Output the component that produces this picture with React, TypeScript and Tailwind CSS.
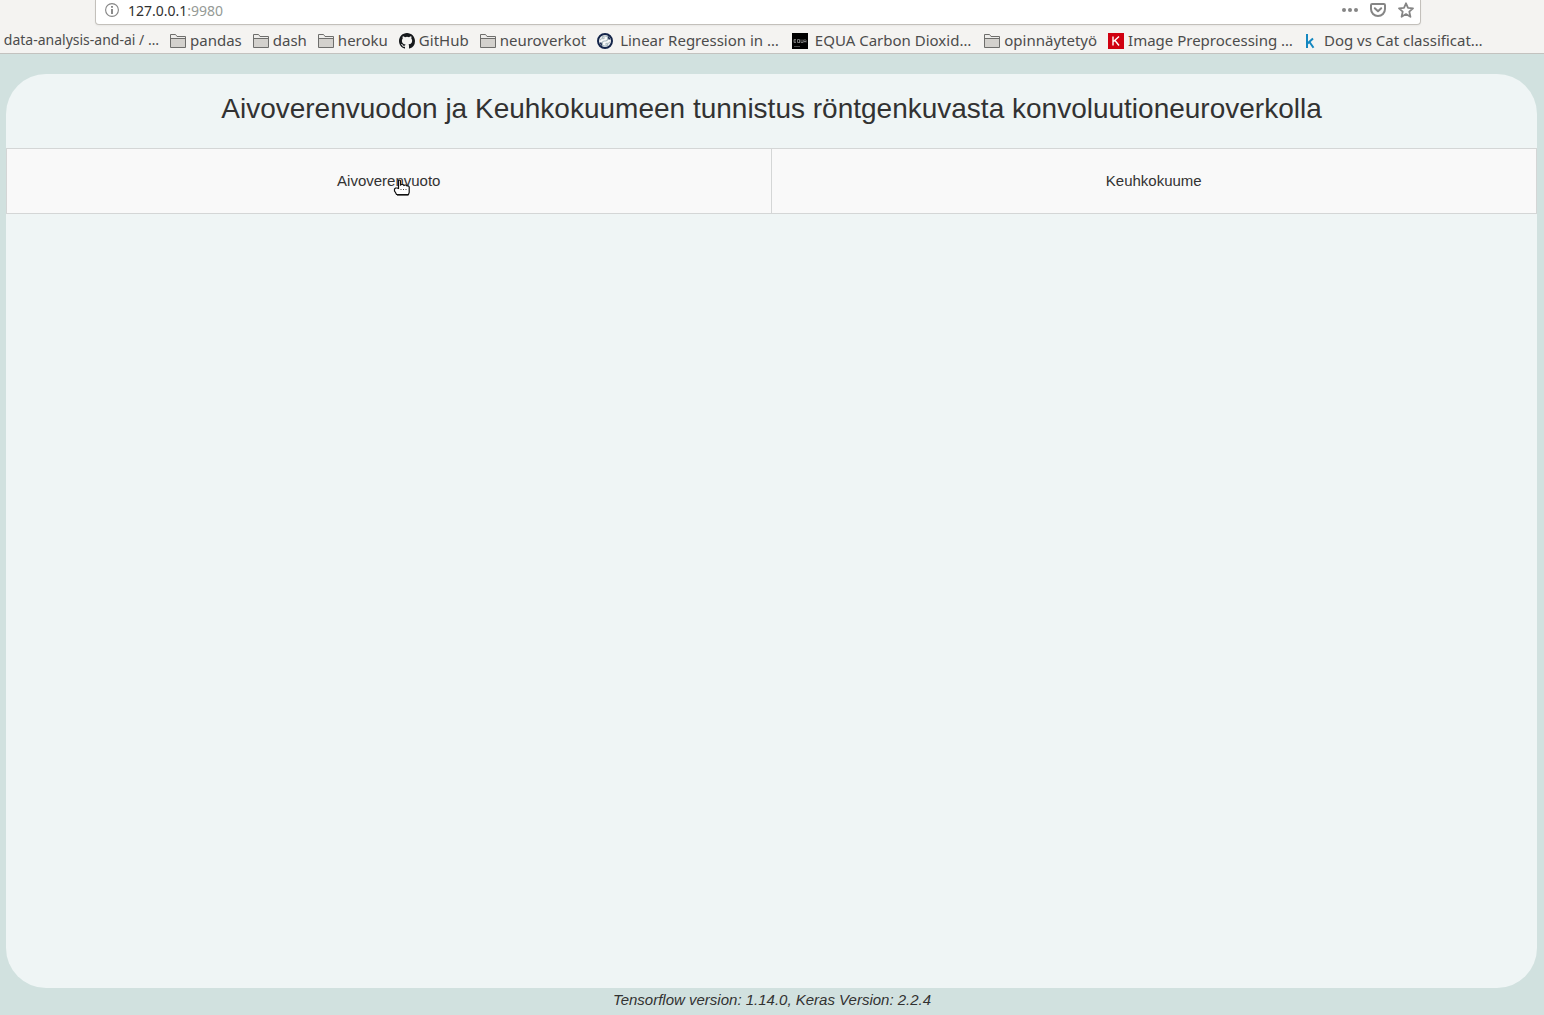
import type { ReactNode } from "react";

function FolderIcon() {
  return (
    <svg width="16" height="16" viewBox="0 0 16 16" className="shrink-0" aria-hidden="true">
      <path d="M.5 14.5V1.5H5.5L7 3.5H15.5V14.5Z" fill="#d3d1cd" stroke="#6e6e6c" />
      <path d="M1 2H5.2L6.8 4H15V5H1Z" fill="#eeedeb" />
      <path d="M1 5.5H15" fill="none" stroke="#6e6e6c" />
    </svg>
  );
}

function GitHubIcon() {
  return (
    <svg width="16" height="16" viewBox="0 0 16 16" className="shrink-0" aria-hidden="true">
      <path
        fill="#16191c"
        d="M8 0C3.58 0 0 3.58 0 8c0 3.54 2.29 6.53 5.47 7.59.4.07.55-.17.55-.38 0-.19-.01-.82-.01-1.49-2.01.37-2.53-.49-2.69-.94-.09-.23-.48-.94-.82-1.13-.28-.15-.68-.52-.01-.53.63-.01 1.08.58 1.23.82.72 1.21 1.87.87 2.33.66.07-.52.28-.87.51-1.07-1.78-.2-3.64-.89-3.64-3.95 0-.87.31-1.59.82-2.15-.08-.2-.36-1.02.08-2.12 0 0 .67-.21 2.2.82a7.6 7.6 0 0 1 4 0c1.53-1.04 2.2-.82 2.2-.82.44 1.1.16 1.92.08 2.12.51.56.82 1.27.82 2.15 0 3.07-1.87 3.75-3.65 3.95.29.25.54.73.54 1.48 0 1.07-.01 1.93-.01 2.2 0 .21.15.46.55.38A8.01 8.01 0 0 0 16 8c0-4.42-3.58-8-8-8Z"
      />
    </svg>
  );
}

function PythonIcon() {
  return (
    <svg width="16" height="16" viewBox="0 0 16 16" className="shrink-0" aria-hidden="true">
      <circle cx="8" cy="8" r="7" fill="#fafafa" stroke="#14254a" strokeWidth="2" />
      <path
        d="M5.4 5V3.8Q8 2.2 10.6 3.8V6.4Q10.4 8 8.5 8H7.5Q5.6 8 5.4 9.6V12.2Q8 13.8 10.6 12.2V11M5.4 5H8M10.6 11H8"
        fill="none"
        stroke="#a9b9be"
        strokeWidth="1.2"
      />
      <path d="M10.8 2.8Q12.8 4 13.4 6.4H11.4ZM5.2 13.2Q3.2 12 2.6 9.6H4.6Z" fill="#14254a" />
      <path d="M3 7.5Q3 5.7 5 5.7H7M13 8.5Q13 10.3 11 10.3H9" fill="none" stroke="#a9b9be" />
    </svg>
  );
}

function EquaIcon() {
  return (
    <svg width="16" height="16" viewBox="0 0 16 16" className="shrink-0" aria-hidden="true">
      <rect width="16" height="16" fill="#000" />
      <path
        d="M4 6.5H2V9.5H4M2 8H4M5.5 6.5H7.5V9.5H5.5ZM7 9L8 10M9 6.5V9.5H11V6.5M12 9.5V7.5L13 6.5L14 7.5V9.5M12 8.5H14"
        fill="none"
        stroke="#8d8d8d"
        strokeWidth=".8"
      />
      <path d="M2 13.5H8" stroke="#4a4a4a" />
    </svg>
  );
}

function KerasIcon() {
  return (
    <svg width="16" height="16" viewBox="0 0 16 16" className="shrink-0" aria-hidden="true">
      <rect width="16" height="16" fill="#d00010" />
      <path d="M5 3.5V12.5M11 3.5L5.5 8.5M7 7.5L11 12.5" fill="none" stroke="#fff" strokeWidth="1.4" />
    </svg>
  );
}

function KaggleIcon() {
  return (
    <svg width="16" height="16" viewBox="0 0 16 16" className="shrink-0" aria-hidden="true">
      <path d="M3 1V15M9 5.5L3.5 10.5M5.5 9L9.5 14.7" fill="none" stroke="#1487c0" strokeWidth="2" />
    </svg>
  );
}

function InfoIcon() {
  return (
    <svg width="14" height="14" viewBox="0 0 14 14" aria-hidden="true">
      <circle cx="7" cy="7" r="6.4" fill="none" stroke="#858585" strokeWidth="1.1" />
      <path d="M7 3V4.8M7 6V11" stroke="#777" strokeWidth="1.7" />
    </svg>
  );
}

function PocketIcon() {
  return (
    <svg width="16" height="16" viewBox="0 0 16 16" fill="none" stroke="#858585" strokeWidth="2" aria-hidden="true">
      <path d="M2.2 2H13.8Q15 2 15 3.2V7A7 7 0 0 1 1 7V3.2Q1 2 2.2 2Z" />
      <path d="M4.8 6.3L8 9.3L11.2 6.3" strokeLinecap="round" strokeLinejoin="round" />
    </svg>
  );
}

function StarIcon() {
  return (
    <svg width="16" height="16" viewBox="0 0 16 16" fill="none" stroke="#858585" strokeWidth="1.8" aria-hidden="true">
      <path
        d="M8 1.3L10 5.8L15 6.3L11.3 9.6L12.4 14.8L8 12.1L3.6 14.8L4.7 9.6L1 6.3L6 5.8Z"
        strokeLinejoin="round"
      />
    </svg>
  );
}

function HandCursor() {
  return (
    <svg
      width="17"
      height="18"
      viewBox="0 0 17 18"
      className="pointer-events-none absolute top-1/2 left-1/2 translate-x-1 -translate-y-0.5"
      aria-hidden="true"
    >
      <path
        d="M5.5 9.5V2Q5.5 1 6.5 1T7.5 2V6L8.5 5.5H10L11 6.5L12 6H13L14 7H15.5L16.2 8V13.5L15.5 15.5H3.5L2.5 13.5L1.5 12V10L2.5 9H4Z"
        fill="#fff"
        stroke="#111"
        strokeWidth="1.2"
      />
      <path d="M7.5 10.5H8.5M10 10.5H11M12.5 10.5H13.5" stroke="#444" />
      <path d="M4 16.5H15.5" stroke="#666" />
    </svg>
  );
}

function Bookmark({ icon, label, wide = false }: { icon: ReactNode; label: string; wide?: boolean }) {
  return (
    <a href="#" className={`flex shrink-0 items-center ${wide ? "mr-0.5 gap-[7px]" : "gap-1"}`}>
      {icon}
      <span className="pb-0.5">{label}</span>
    </a>
  );
}

export default function App() {
  return (
    <div className="flex min-h-screen flex-col bg-[#d1e1df] font-['Liberation_Sans',sans-serif] text-[#323232]">
      <header className="border-b border-[#c3c2bf] bg-[#f4f3f1] font-['Noto_Sans',sans-serif] text-[#4c4c4c]">
        <div className="mr-[123px] ml-[95px] flex h-[25px] items-center rounded-b border border-t-0 border-[#c3c0bb] bg-white pr-1 pb-1 pl-[9px] shadow-xs">
          <button type="button" aria-label="Site information">
            <InfoIcon />
          </button>
          <a href="#" className="ml-[9px] pt-0.5 text-sm leading-5 text-[#959a96]">
            <span className="text-[#303030]">127.0.0.1</span>:9980
          </a>
          <div className="mr-0.5 ml-auto flex items-center gap-3">
            <button type="button" aria-label="Page actions">
              <svg width="16" height="16" viewBox="0 0 16 16" fill="#858585" aria-hidden="true">
                <circle cx="2" cy="8" r="2" />
                <circle cx="8" cy="8" r="2" />
                <circle cx="14" cy="8" r="2" />
              </svg>
            </button>
            <button type="button" aria-label="Save to Pocket">
              <PocketIcon />
            </button>
            <button type="button" aria-label="Bookmark this page">
              <StarIcon />
            </button>
          </div>
        </div>
        <nav className="flex h-7 items-center gap-[11px] overflow-hidden pt-[5px] pb-px text-[15px] leading-5 whitespace-nowrap">
          <a href="#" className="flex w-[159px] shrink-0 justify-end pb-0.5 text-sm">
            data-analysis-and-ai / …
          </a>
          <Bookmark icon={<FolderIcon />} label="pandas" />
          <Bookmark icon={<FolderIcon />} label="dash" />
          <Bookmark icon={<FolderIcon />} label="heroku" />
          <Bookmark icon={<GitHubIcon />} label="GitHub" />
          <Bookmark icon={<FolderIcon />} label="neuroverkot" />
          <Bookmark icon={<PythonIcon />} label="Linear Regression in …" wide />
          <Bookmark icon={<EquaIcon />} label="EQUA Carbon Dioxid…" wide />
          <Bookmark icon={<FolderIcon />} label="opinnäytetyö" />
          <Bookmark icon={<KerasIcon />} label="Image Preprocessing …" />
          <Bookmark icon={<KaggleIcon />} label="Dog vs Cat classificat…" />
        </nav>
      </header>
      <main className="mt-5 mr-[7px] ml-1.5 flex grow flex-col rounded-[40px] bg-[#eff5f5]">
        <h1 className="pt-[15px] pb-[19px] text-center text-[28px] leading-10">
          Aivoverenvuodon ja Keuhkokuumeen tunnistus röntgenkuvasta konvoluutioneuroverkolla
        </h1>
        <div role="tablist" className="grid grid-cols-2 border border-[#d4d6d6] bg-[#f9f9f9] text-[15px] leading-6">
          <button type="button" role="tab" className="relative border-r border-[#d4d6d6] py-5">
            Aivoverenvuoto
            <HandCursor />
          </button>
          <button type="button" role="tab" className="py-5">
            Keuhkokuume
          </button>
        </div>
      </main>
      <footer className="pb-[3px] text-center text-[15px] leading-6 italic">
        Tensorflow version: 1.14.0, Keras Version: 2.2.4
      </footer>
    </div>
  );
}
